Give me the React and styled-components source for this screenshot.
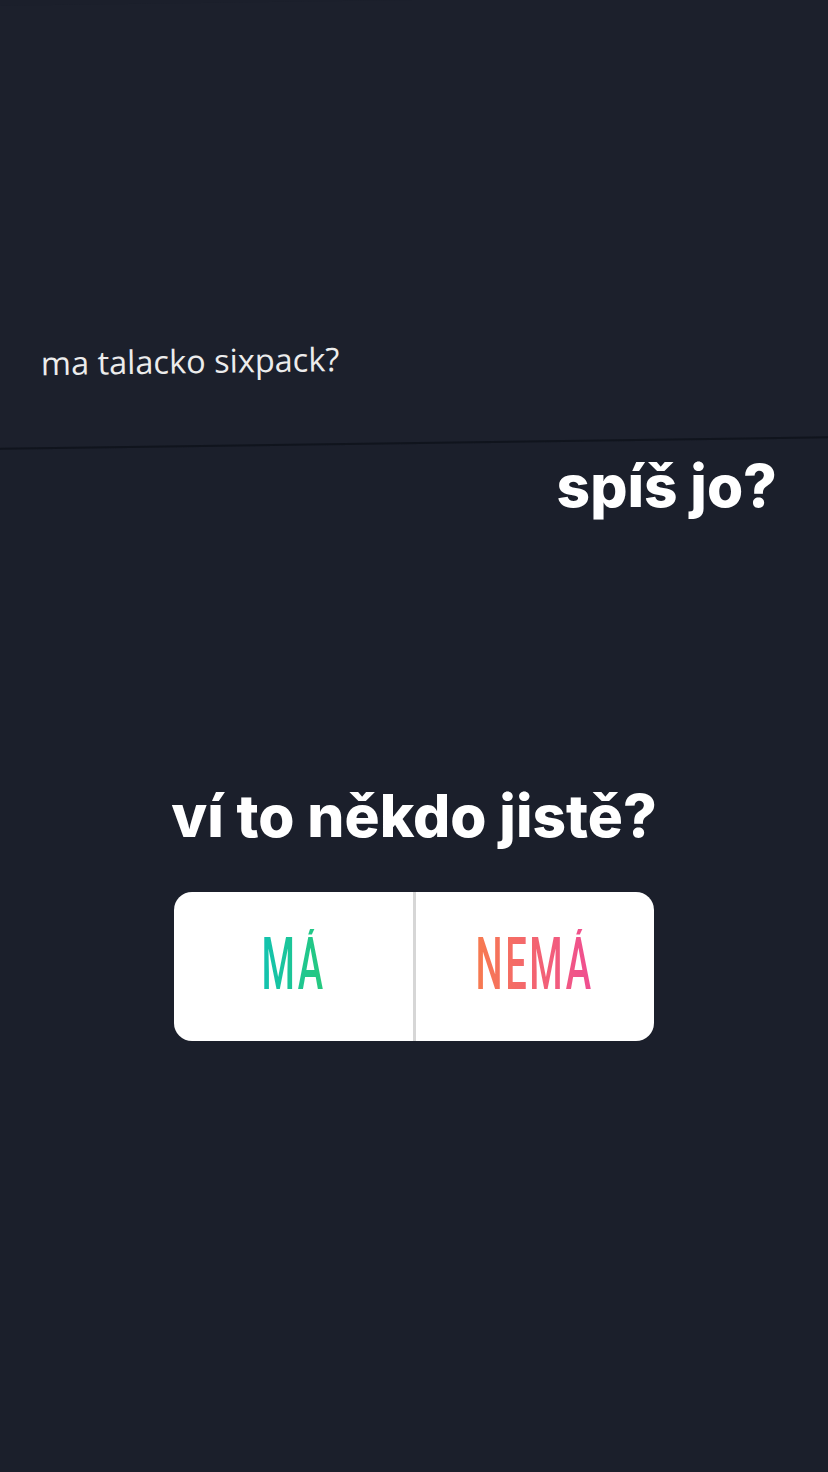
import styled, { createGlobalStyle } from "styled-components";

const GlobalStyle = createGlobalStyle`
  html, body {
    margin: 0;
    padding: 0;
    background: #1b1f2b;
  }
  * {
    box-sizing: border-box;
  }
`;

export default function App() {
  return (
    <>
      <GlobalStyle />
      <Story>
        <Screenshot>
          <QuestionText>ma talacko sixpack?</QuestionText>
        </Screenshot>
        <Caption>spíš jo?</Caption>
        <PollBlock>
          <PollTitle>ví to někdo jistě?</PollTitle>
          <Poll>
            <Option>
              <OptionLabel $from="#12c2b0" $to="#27c97c">MÁ</OptionLabel>
            </Option>
            <Divider />
            <Option>
              <OptionLabel $from="#f77b4f" $to="#ef4d93">NEMÁ</OptionLabel>
            </Option>
          </Poll>
        </PollBlock>
      </Story>
    </>
  );
}

const Story = styled.div`
  width: 828px;
  height: 1472px;
  background: #1b1f2b;
  display: flex;
  flex-direction: column;
  overflow: hidden;
`;

const Screenshot = styled.div`
  height: 444px;
  margin: 0 -20px;
  padding: 0 0 68px 59px;
  display: flex;
  align-items: flex-end;
  background: #1c202c;
  border-bottom: 2px solid #10141d;
  transform: rotate(-0.8deg);
`;

const QuestionText = styled.div`
  font-family: "Open Sans", sans-serif;
  font-size: 32.5px;
  color: #ececec;
  line-height: 1;
`;

const Caption = styled.div`
  margin-top: 10px;
  padding-right: 51px;
  text-align: right;
  font-family: Inter, sans-serif;
  font-weight: 800;
  font-size: 58.5px;
  line-height: 64px;
  color: #ffffff;
`;

const PollBlock = styled.div`
  margin-top: 266px;
  display: flex;
  flex-direction: column;
  align-items: center;
  gap: 44px;
`;

const PollTitle = styled.div`
  font-family: Inter, sans-serif;
  font-weight: 800;
  font-size: 58.5px;
  line-height: 64px;
  color: #ffffff;
`;

const Poll = styled.div`
  width: 480px;
  height: 149px;
  background: #ffffff;
  border-radius: 18px;
  display: flex;
  overflow: hidden;
`;

const Option = styled.div`
  flex: 1 1 0;
  min-width: 0;
  display: flex;
  align-items: center;
  justify-content: center;
  padding-bottom: 4px;
`;

const Divider = styled.div`
  flex: 0 0 3px;
  background: #d6d6d6;
`;

const OptionLabel = styled.span`
  display: inline-block;
  font-family: Roboto, "DejaVu Sans", sans-serif;
  font-weight: 500;
  font-size: 72px;
  line-height: 1;
  letter-spacing: 5px;
  white-space: nowrap;
  transform: scaleX(0.53);
  background: linear-gradient(90deg, ${(p) => p.$from}, ${(p) => p.$to});
  -webkit-background-clip: text;
  background-clip: text;
  color: transparent;
`;
